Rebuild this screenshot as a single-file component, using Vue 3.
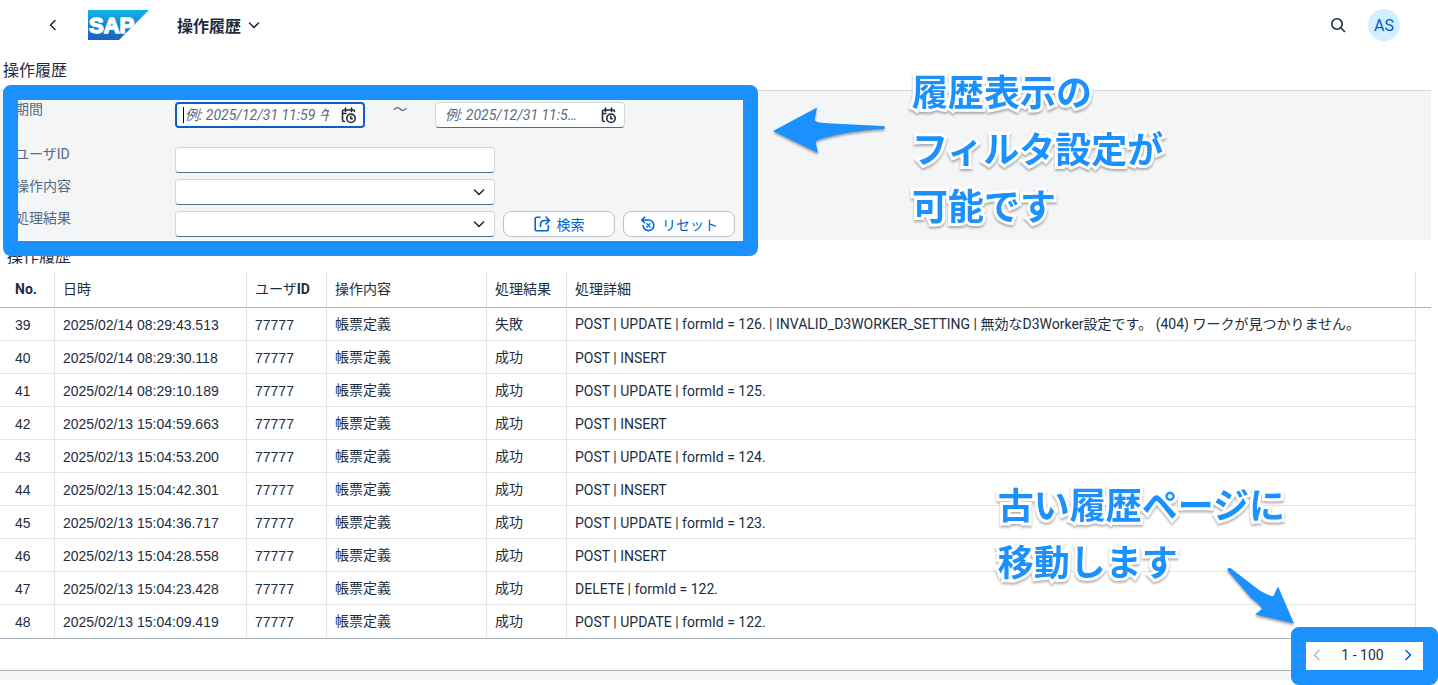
<script setup>
import { ref } from 'vue'

const from = ref('')
const to = ref('')
const userId = ref('')
const operation = ref('')
const result = ref('')

const rows = [
  [39, '2025/02/14 08:29:43.513', '失敗', 'POST | UPDATE | formId = 126. | INVALID_D3WORKER_SETTING | 無効なD3Worker設定です。 (404) ワークが見つかりません。'],
  [40, '2025/02/14 08:29:30.118', '成功', 'POST | INSERT'],
  [41, '2025/02/14 08:29:10.189', '成功', 'POST | UPDATE | formId = 125.'],
  [42, '2025/02/13 15:04:59.663', '成功', 'POST | INSERT'],
  [43, '2025/02/13 15:04:53.200', '成功', 'POST | UPDATE | formId = 124.'],
  [44, '2025/02/13 15:04:42.301', '成功', 'POST | INSERT'],
  [45, '2025/02/13 15:04:36.717', '成功', 'POST | UPDATE | formId = 123.'],
  [46, '2025/02/13 15:04:28.558', '成功', 'POST | INSERT'],
  [47, '2025/02/13 15:04:23.428', '成功', 'DELETE | formId = 122.'],
  [48, '2025/02/13 15:04:09.419', '成功', 'POST | UPDATE | formId = 122.']
]
</script>

<template>
  <div class="app">
    <header class="shell">
      <button class="icon-btn back" aria-label="戻る">
        <svg width="16" height="16" viewBox="0 0 16 16"><path d="M10 3.5 5.5 8l4.500 4.500" /></svg>
      </button>
      <svg class="logo" width="61" height="30" viewBox="0 0 61 30" role="img" aria-label="SAP">
        <defs>
          <linearGradient id="logoFill" x1="0" y1="0" x2="0" y2="1">
            <stop offset="0" stop-color="#0cb4ec" />
            <stop offset="0.5" stop-color="#1686d2" />
            <stop offset="1" stop-color="#1f5fbb" />
          </linearGradient>
        </defs>
        <path d="M0 0h61L31 30H0z" fill="url(#logoFill)" />
        <text x="1" y="23" class="logo-text">SAP</text>
      </svg>
      <button class="app-title">
        操作履歴
        <svg width="16" height="16" viewBox="0 0 16 16"><path d="M3.500 6 8 10.500 12.500 6" /></svg>
      </button>
      <button class="icon-btn search" aria-label="検索を開く">
        <svg width="16" height="16" viewBox="0 0 16 16"><circle cx="7" cy="7" r="5.200" /><path d="m11 11 3.500 3.500" /></svg>
      </button>
      <button class="avatar">AS</button>
    </header>

    <main class="content">
      <h1 class="page-title">操作履歴</h1>

      <form class="filters" @submit.prevent>
        <div class="row period">
          <label for="from">期間</label>
          <div class="field date focused">
            <input id="from" v-model="from" type="text" placeholder="例: 2025/12/31 11:59 午後" />
            <span class="caret"></span>
            <svg class="calendar" width="16" height="17" viewBox="0 0 16 17">
              <path d="M4.500 1v3.500M10.500 1v3.500M3.500 14.500H3A1.500 1.500 0 0 1 1.500 13V4.500A1.500 1.500 0 0 1 3 3h9a1.500 1.500 0 0 1 1.500 1.500M1.500 6.500h3.500" />
              <circle cx="10" cy="11.300" r="4.200" /><path d="M9.800 9.500v2.200h1.500" />
            </svg>
          </div>
          <span class="tilde">～</span>
          <div class="field date">
            <input v-model="to" class="ellipsis" type="text" aria-label="期間の終了" placeholder="例: 2025/12/31 11:59 午後" />
            <svg class="calendar" width="16" height="17" viewBox="0 0 16 17">
              <path d="M4.500 1v3.500M10.500 1v3.500M3.500 14.500H3A1.500 1.500 0 0 1 1.500 13V4.500A1.500 1.500 0 0 1 3 3h9a1.500 1.500 0 0 1 1.500 1.500M1.500 6.500h3.500" />
              <circle cx="10" cy="11.300" r="4.200" /><path d="M9.800 9.500v2.200h1.500" />
            </svg>
          </div>
        </div>
        <div class="row">
          <label for="user">ユーザID</label>
          <div class="field"><input id="user" v-model="userId" type="text" /></div>
        </div>
        <div class="row">
          <label for="operation">操作内容</label>
          <div class="field">
            <select id="operation" v-model="operation"><option value=""></option><option>帳票定義</option></select>
            <svg class="arrow-down" width="16" height="16" viewBox="0 0 16 16"><path d="M3.500 6 8 10.500 12.500 6" /></svg>
          </div>
        </div>
        <div class="row">
          <label for="result">処理結果</label>
          <div class="field">
            <select id="result" v-model="result"><option value=""></option><option>成功</option><option>失敗</option></select>
            <svg class="arrow-down" width="16" height="16" viewBox="0 0 16 16"><path d="M3.500 6 8 10.500 12.500 6" /></svg>
          </div>
          <button class="action">
            <svg width="17" height="16" viewBox="0 0 17 16">
              <path d="M6 1.200H3A1.800 1.800 0 0 0 1.200 3v10A1.800 1.800 0 0 0 3 14.800h9.500a1.800 1.800 0 0 0 1.800-1.800V9.500M6.500 10.500V8.500a4 4 0 0 1 4-4H15.500M12 1l3.500 3.500L12 8" />
            </svg>
            検索
          </button>
          <button class="action" type="reset">
            <svg width="16" height="16" viewBox="0 0 16 16">
              <path d="M2 4h6.500a5.300 5.300 0 1 1-5.300 5.500M4.500 1.200 1.800 4l2.700 2.700" />
              <path class="thin" d="M6.800 7.700l3.300 3.300M10.100 7.700l-3.300 3.300" />
            </svg>
            リセット
          </button>
        </div>

        <div class="frame frame-filters"></div>
        <svg class="pointer pointer-filters" width="120" height="54" viewBox="0 0 120 54">
          <path d="M3 27 47 3.500 44.500 16Q46 19 62 19.500L113 22q2 0 2 1.500t-2 1.500Q88 26 64 31.500 48 35 45.500 37.500L48 49z" />
        </svg>
        <p class="note note-filters">履歴表示の<br />フィルタ設定が<br />可能です</p>
      </form>

      <section>
        <h2 class="table-title">操作履歴</h2>
        <table>
          <colgroup>
            <col class="c-no" /><col class="c-date" /><col class="c-short" /><col class="c-op" /><col class="c-short" /><col /><col class="c-end" />
          </colgroup>
          <thead>
            <tr>
              <th><b>No.</b></th><th>日時</th><th>ユーザ<b>ID</b></th><th>操作内容</th><th>処理結果</th><th>処理詳細</th><td class="end"></td>
            </tr>
          </thead>
          <tbody>
            <tr v-for="r in rows" :key="r[0]">
              <td class="num">{{ r[0] }}</td>
              <td class="num">{{ r[1] }}</td>
              <td class="num">77777</td>
              <td>帳票定義</td>
              <td>{{ r[2] }}</td>
              <td class="detail">{{ r[3] }}</td>
              <td class="end"></td>
            </tr>
          </tbody>
        </table>
        <div class="footer">
          <nav class="pager" aria-label="ページ">
            <button class="page-btn" disabled aria-label="前のページ">
              <svg width="16" height="16" viewBox="0 0 16 16"><path d="M10 3.500 5.500 8l4.500 4.500" /></svg>
            </button>
            <span class="range">1 - 100</span>
            <button class="page-btn" aria-label="次のページ">
              <svg width="16" height="16" viewBox="0 0 16 16"><path d="M6 3.500 10.500 8 6 12.500" /></svg>
            </button>
          </nav>
          <div class="frame frame-pager"></div>
          <svg class="pointer pointer-pager" width="74" height="66" viewBox="0 0 74 66">
            <path d="M4.500 3Q3 3.500 4 6L27 33Q39 42 38 44L31 49.500 70 58.500 54 21.500 49.500 31Q47 32 35 25L7 3.500Q5.500 2.500 4.500 3z" />
          </svg>
          <p class="note note-pager">古い履歴ページに<br />移動します</p>
        </div>
        <div class="strip"></div>
      </section>
    </main>
  </div>
</template>

<style>
body {
  margin: 0;
  background: #fff;
}
</style>

<style scoped>
.app {
  min-height: 100vh;
  font-family: Roboto, "Noto Sans CJK JP", sans-serif;
  font-size: 14px;
  color: #1d2d3e;
}
button {
  font: inherit;
  color: inherit;
  border: 0;
  padding: 0;
  background: none;
}
svg {
  display: block;
  flex: none;
  fill: none;
  stroke: currentColor;
  stroke-width: 1.6;
  stroke-linecap: round;
  stroke-linejoin: round;
}
.thin {
  stroke-width: 1.3;
}
.shell {
  display: flex;
  align-items: center;
  height: 50px;
  padding: 0 38px 0 45px;
}
.logo {
  margin: 0 28px 0 27px;
  overflow: visible;
  stroke: none;
}
.logo-text {
  font: 700 22px "Liberation Sans", Arial, sans-serif;
  fill: #fff;
  stroke: #fff;
  stroke-width: 1.5;
}
.app-title {
  display: flex;
  align-items: center;
  gap: 5px;
  padding-bottom: 1px;
  font-size: 16px;
  font-weight: 700;
}
.search {
  margin-left: auto;
  margin-right: 22px;
}
.avatar {
  width: 32px;
  height: 32px;
  border-radius: 50%;
  background: #d1efff;
  color: #0057d2;
  font-size: 16px;
}
.content {
  padding-right: 7px;
}
.page-title,
.table-title {
  margin: 0;
  font-size: 16px;
  font-weight: 400;
}
.page-title {
  padding: 1px 0 0 3px;
  line-height: 39px;
}
.table-title {
  padding: 1px 0 0 7px;
  line-height: 31px;
}
.filters {
  position: relative;
  display: flex;
  flex-direction: column;
  gap: 6px;
  padding: 11px 0 3px 15px;
  border-top: 1px solid #d5d8dc;
  background: #f4f5f7;
}
.row {
  display: flex;
  gap: 8px;
  height: 26px;
}
.period {
  gap: 0;
  margin-bottom: 13px;
}
label {
  width: 152px;
  line-height: 14px;
  color: #556b82;
}
.period label {
  width: 160px;
}
.tilde {
  width: 70px;
  line-height: 14px;
  text-align: center;
  color: #556b82;
}
.field {
  position: relative;
  width: 320px;
}
.date {
  width: 190px;
}
input,
select {
  display: block;
  box-sizing: border-box;
  width: 100%;
  height: 26px;
  margin: 0;
  padding: 0 9px;
  border: 1px solid #d3d7dc;
  border-bottom-color: #556b82;
  border-radius: 4px;
  outline: 0;
  background: #fff;
  color: #1d2d3e;
  font: inherit;
  appearance: none;
}
.date input {
  padding-right: 34px;
}
.date .ellipsis {
  padding-right: 42px;
  text-overflow: ellipsis;
}
.focused input {
  padding-left: 8px;
  border: 2px solid #0a5fcb;
}
input::placeholder {
  color: #556b82;
  font-style: italic;
  opacity: 1;
}
.caret {
  position: absolute;
  left: 8px;
  top: 5px;
  width: 1px;
  height: 16px;
  background: #000;
}
.calendar {
  position: absolute;
  right: 8px;
  top: 5px;
}
.arrow-down {
  position: absolute;
  right: 8px;
  top: 5px;
}
.action {
  display: flex;
  align-items: center;
  justify-content: center;
  gap: 6px;
  box-sizing: border-box;
  width: 112px;
  padding-bottom: 1px;
  border: 1px solid #bcc3ca;
  border-radius: 8px;
  background: #fff;
  color: #0064d9;
}
.frame {
  position: absolute;
  box-sizing: border-box;
  border: 15px solid #1b90ff;
  border-radius: 8px;
  pointer-events: none;
}
.frame-filters {
  left: 3px;
  top: -6px;
  width: 755px;
  height: 171px;
}
.frame-pager {
  right: -7px;
  top: -12px;
  width: 147px;
  height: 58px;
}
.pointer {
  position: absolute;
  fill: #1b90ff;
  stroke: none;
  filter: drop-shadow(0 2px 1px rgba(0, 0, 0, 0.35));
}
.pointer-filters {
  left: 770px;
  top: 13px;
}
.pointer-pager {
  right: 133px;
  top: -74px;
}
.note {
  position: absolute;
  margin: 0;
  font-family: "Noto Sans CJK JP", sans-serif;
  font-size: 36px;
  font-weight: 700;
  line-height: 57px;
  white-space: nowrap;
  color: #1b90ff;
  -webkit-text-stroke: 6px #fff;
  paint-order: stroke fill;
  filter: drop-shadow(0 2px 1px rgba(0, 0, 0, 0.3));
}
.note-filters {
  left: 912px;
  top: -29px;
}
.note-pager {
  right: 146px;
  top: -164px;
}
table {
  width: 100%;
  table-layout: fixed;
  border-collapse: separate;
  border-spacing: 0;
}
.c-no {
  width: 55px;
}
.c-date {
  width: 192px;
}
.c-short {
  width: 80px;
}
.c-op {
  width: 160px;
}
.c-end {
  width: 15px;
}
th,
td {
  box-sizing: border-box;
  height: 33px;
  padding: 0 0 0 8px;
  border-right: 1px solid #e3e5e7;
  border-bottom: 1px solid #e3e5e7;
  font-weight: 400;
  line-height: 20px;
  text-align: left;
  white-space: nowrap;
}
th:first-child,
td:first-child {
  padding-left: 15px;
}
thead th,
thead td {
  height: 36px;
  padding-bottom: 1px;
  border-bottom-color: #a8b2bd;
}
.end {
  padding: 0;
  border-right: 0;
}
tbody .end,
tbody tr:last-child td {
  border-bottom-color: transparent;
}
.num {
  padding-top: 2px;
  font-family: "Liberation Sans", Arial, sans-serif;
}
tr:not(:first-child) .detail {
  padding-top: 2px;
}
.footer {
  position: relative;
  display: flex;
  justify-content: flex-end;
  height: 31px;
  border-top: 1px solid #a8b2bd;
  border-bottom: 1px solid #a8b2bd;
}
.pager {
  display: flex;
  align-items: center;
  gap: 15px;
  padding: 1px 15px 0 0;
}
.page-btn {
  color: #0064d9;
}
.page-btn:disabled {
  color: #a5bfe8;
}
.range {
  min-width: 45px;
  text-align: center;
}
.strip {
  height: 9px;
  background: #f4f5f7;
}
</style>
